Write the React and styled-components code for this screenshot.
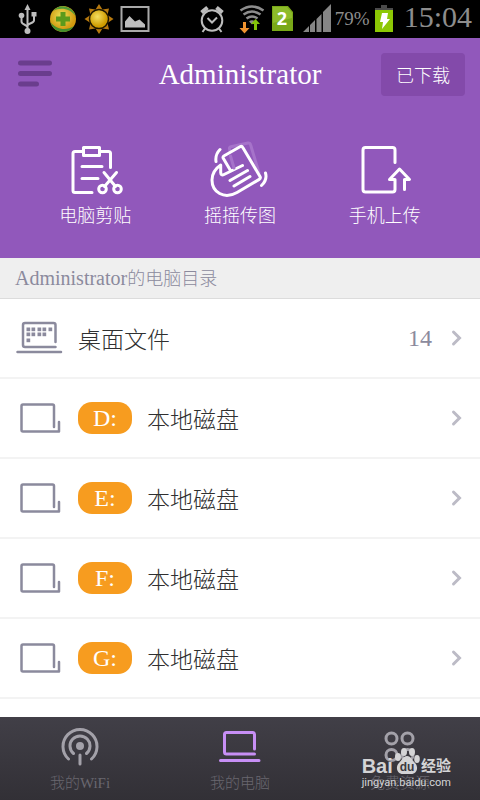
import React from 'react'
import styled, { createGlobalStyle } from 'styled-components'

const drives = ['D:', 'E:', 'F:', 'G:']

function UsbIcon() {
  return (
    <svg width="30" height="32" viewBox="0 0 30 32" fill="none" stroke="#bdbdbd" strokeWidth="2">
      <path d="M15.500 6v22M15.500 24.500c0-3-6-2.500-6-6V13M15.500 23c0-3 6.500-2.500 6.500-5.500V13" />
      <path d="M15.500 1l3 6h-6z" fill="#bdbdbd" stroke="none" />
      <circle cx="9.500" cy="12.500" r="2.800" fill="#bdbdbd" stroke="none" />
      <rect x="19.500" y="9" width="5" height="4.500" fill="#bdbdbd" stroke="none" />
      <circle cx="15.500" cy="28" r="3" fill="#bdbdbd" stroke="none" />
    </svg>
  )
}

function GuardIcon() {
  return (
    <svg width="30" height="32" viewBox="0 0 30 32">
      <defs>
        <radialGradient id="guard" cx="45%" cy="40%">
          <stop offset="0" stopColor="#ece45a" />
          <stop offset="1" stopColor="#d29a10" />
        </radialGradient>
      </defs>
      <circle cx="15" cy="16" r="13" fill="url(#guard)" />
      <path d="M5 8A13 13 0 0 1 27.500 13C22 5 12 4 5 8z" fill="#4f9a35" />
      <path d="M26 23A13 13 0 0 1 2.500 19C8 27 19 28 26 23z" fill="#438e2e" />
      <path d="M12.500 9h5v4.500H22v5h-4.500V23h-5v-4.500H8v-5h4.500z" fill="#5c9a1c" />
    </svg>
  )
}

function SunIcon() {
  return (
    <svg width="30" height="32" viewBox="0 0 30 32">
      <defs>
        <radialGradient id="sun" cx="42%" cy="38%">
          <stop offset="0" stopColor="#f3de62" />
          <stop offset="1" stopColor="#cf9c00" />
        </radialGradient>
      </defs>
      <path
        d="M15 1l3.500 5.500 6.500-1-1.500 6.500L29.500 16 23.500 20 25 26.500l-6.500-1L15 31l-3.500-5.500-6.500 1L6.500 20 .5 16l6-4L5 5.500l6.500 1z"
        fill="#b87a0f"
      />
      <circle cx="15" cy="16" r="9.500" fill="url(#sun)" stroke="#1c1500" strokeWidth="1.500" />
    </svg>
  )
}

function PictureIcon() {
  return (
    <svg width="30" height="32" viewBox="0 0 30 32">
      <rect x="1.500" y="4" width="27" height="24" fill="none" stroke="#a9a9a9" strokeWidth="2" />
      <path d="M5 24.500v-6l4.500-5.500 5.500 5.500 4.500-2 5.500 5v3z" fill="#bdbdbd" />
    </svg>
  )
}

function AlarmIcon() {
  return (
    <svg width="36" height="32" viewBox="0 0 36 32" fill="none" stroke="#bdbdbd" strokeWidth="2">
      <circle cx="13" cy="17.500" r="10.300" />
      <path d="M8.500 15l4.500 4.500 5-5M6 25.500L3.500 29M20 25.500l2.500 3.500" />
      <path d="M2.500 9.500l6-5M23.500 9.500l-6-5" strokeWidth="4" />
    </svg>
  )
}

function WifiSignal() {
  return (
    <svg width="28" height="32" viewBox="0 0 28 32" fill="none" stroke="#8d8d8d" strokeWidth="2.500">
      <path d="M1.500 7.500q11.500-8 23 0M4.500 11.500q8.500-6 17 0M7.500 15.500q5.500-4 11 0" />
      <path d="M10 18.500q3-2.500 6 0l-3 3z" fill="#8d8d8d" stroke="none" />
      <path d="M4 19h3v6h3.500l-5 5.500-5-5.500H4z" fill="#ef9330" stroke="none" />
      <path d="M15 27v-6h-3l4.500-5 4.500 5h-3v6z" fill="#84c40a" stroke="none" />
    </svg>
  )
}

function SimIcon() {
  return (
    <svg width="28" height="32" viewBox="0 0 28 32">
      <path d="M1 3h16l5 6v19H1z" fill="#79a818" />
      <path d="M2 4h14l5 6v5L2 20z" fill="#8dbb2a" />
      <text x="11" y="22" textAnchor="middle" fontFamily="Open Sans, sans-serif" fontWeight="700" fontSize="18" fill="#fff">2</text>
    </svg>
  )
}

function SignalIcon() {
  return (
    <svg width="28" height="32" viewBox="0 0 28 32" fill="#858585">
      <path d="M0 29l6-6v6zM7 22l5-5v12H7zM13.500 16l5-5v18h-5zM20 9l8-8v28h-8z" />
    </svg>
  )
}

function BatteryIcon() {
  return (
    <svg width="26" height="32" viewBox="0 0 26 32">
      <path d="M7 2h6v3h6v4H1V5h6z" fill="#4b4b4b" />
      <rect x="1" y="7" width="18" height="22" fill="#8dc805" />
      <path d="M8 10h6l-1 6h3L8 26l1-7H6z" fill="#fff" />
    </svg>
  )
}

function MenuIcon() {
  return (
    <svg width="36" height="28" viewBox="0 0 36 28" stroke="#6a3d8d" strokeWidth="5" strokeLinecap="round">
      <path d="M5.500 3h29M5.500 13.500h29M5.500 24h16" />
    </svg>
  )
}

function ClipboardIcon() {
  return (
    <svg width="60" height="60" viewBox="0 0 60 60" fill="none" stroke="#fff" strokeWidth="3" strokeLinecap="round" strokeLinejoin="round">
      <path d="M17 11.500H10q-2 0-2 2v37q0 2 2 2h17M35 11.500h8.500q2 0 2 2V27.500M17 26.500h20M17 38.500h16" />
      <rect x="18.500" y="7.500" width="16" height="8" />
      <path d="M39 32.500l11.500 14M51.500 32.500L39.500 46.500" />
      <circle cx="37.500" cy="49" r="3.800" />
      <circle cx="52.500" cy="49" r="3.800" />
    </svg>
  )
}

function ShakeIcon() {
  return (
    <svg width="60" height="60" viewBox="0 0 60 60" fill="none" stroke="#fff" strokeWidth="3" strokeLinecap="round" strokeLinejoin="round">
      <path d="M24 28L19.500 9q-.4-1.800 1.400-2.200L38 3q2-.4 2.500 1.500L49 33" stroke="#a673ca" />
      <path
        d="M20.500 30.500L13.400 18.500q-1-1.800.8-2.800L30 6.700q1.800-1 2.800.8L50 36.500q1 1.800-.8 2.900L27 52.500C14 60 2 52 2 40c0-7 3.500-11.500 8.700-15v7.500q.3 3.500 3.300 2l18.500-9"
        fill="#9158bb"
      />
      <path d="M24 28L20.500 16" stroke="#a673ca" />
      <path d="M20 40.500l17.500-10M24 46l16-9.500M10 9.500q-5 5-4 12M55.500 33q2 7-4 12.500" />
    </svg>
  )
}

function UploadIcon() {
  return (
    <svg width="60" height="60" viewBox="0 0 60 60" fill="none" stroke="#fff" strokeWidth="3" strokeLinecap="round" strokeLinejoin="round">
      <path d="M40 22.500V10q0-2.500-2.500-2.500H10.500Q8 7.500 8 10v39.500Q8 52 10.500 52h27Q40 52 40 49.500V39.500h-5.500l10-10.500 10 10.500h-5V49.500" />
    </svg>
  )
}

function DesktopIcon() {
  const dots = [[13, 9], [18, 9], [24, 9], [29, 9], [35, 9], [13, 14], [18, 14], [24, 14], [29, 14], [13, 20]]
  return (
    <svg width="48" height="36" viewBox="0 0 48 36" fill="none" stroke="#8b8a9d" strokeWidth="2.500" strokeLinecap="round">
      <path d="M40.500 22V5q0-2-2-2H10Q8 3 8 5v20q0 2 2 2h30.500M2.500 32h43.500" />
      {dots.map(([x, y]) => (
        <rect key={`${x}-${y}`} x={x - 1.5} y={y - 1.5} width="3.700" height="3.700" fill="#8b8a9d" stroke="none" />
      ))}
    </svg>
  )
}

function DriveIcon() {
  return (
    <svg width="48" height="36" viewBox="0 0 48 36" fill="none" stroke="#8b8a9d" strokeWidth="2.500" strokeLinecap="round" strokeLinejoin="round">
      <path d="M39 27V6q0-1.500-1.500-1.500H8Q6.500 4.500 6.500 6v24q0 1.500 1.500 1.500h36V22" />
    </svg>
  )
}

function ChevronIcon() {
  return (
    <svg width="18" height="20" viewBox="0 0 18 20" fill="none" stroke="#bcbbc6" strokeWidth="3" strokeLinecap="round">
      <path d="M6.500 4l6 6-6 6" />
    </svg>
  )
}

function HotspotIcon() {
  return (
    <svg width="40" height="40" viewBox="0 0 40 40" fill="none" stroke="#a3a1a9" strokeWidth="3" strokeLinecap="round">
      <path d="M8.500 32A17 17 0 1 1 31.500 32M13.500 26.500a10 10 0 1 1 13 0M20 28v9" />
      <circle cx="20" cy="19" r="4" fill="#a3a1a9" stroke="none" />
    </svg>
  )
}

function LaptopIcon() {
  return (
    <svg width="42" height="40" viewBox="0 0 42 40" fill="none" stroke="#c78ff5" strokeWidth="3" strokeLinecap="round">
      <path d="M35.500 22V7.500q0-2-2-2h-26q-2 0-2 2v17.500q0 2 2 2h28M1.500 33.500h38.500" />
    </svg>
  )
}

function AppsIcon() {
  return (
    <svg width="40" height="40" viewBox="0 0 40 40" fill="none" stroke="#a3a1a9" strokeWidth="3">
      <circle cx="11.500" cy="11.500" r="5.500" />
      <circle cx="27.500" cy="11.500" r="5.500" />
      <circle cx="11.500" cy="28" r="5.500" />
      <circle cx="27.500" cy="28" r="5.500" />
    </svg>
  )
}

function PawIcon() {
  return (
    <svg width="26" height="28" viewBox="0 0 26 28" fill="#d4d4d6">
      <ellipse cx="4" cy="10" rx="3" ry="4" />
      <ellipse cx="10" cy="5" rx="3" ry="4" />
      <ellipse cx="18" cy="5" rx="3" ry="4" />
      <ellipse cx="23" cy="12" rx="2.800" ry="4" />
      <path d="M13 9c4 0 5 4 8 7 4 4 2 11-4 11H9c-6 0-8-7-4-11C8 13 9 9 13 9z" />
      <text x="13" y="24" textAnchor="middle" fontFamily="Liberation Sans, sans-serif" fontWeight="700" fontSize="12" fill="#3b3940">du</text>
    </svg>
  )
}

function App() {
  return (
    <Page>
      <GlobalStyle />
      <StatusBar>
        <StatusGroup $gap="6px">
          <UsbIcon />
          <GuardIcon />
          <SunIcon />
          <PictureIcon />
        </StatusGroup>
        <StatusGroup $gap="4px">
          <AlarmIcon />
          <WifiSignal />
          <SimIcon />
          <SignalIcon />
          <Percent>79%</Percent>
          <BatteryIcon />
          <Clock>15:04</Clock>
        </StatusGroup>
      </StatusBar>

      <Header>
        <TitleBar>
          <MenuButton aria-label="菜单"><MenuIcon /></MenuButton>
          <Title>Administrator</Title>
          <DownloadButton>已下载</DownloadButton>
        </TitleBar>
        <Actions>
          <Action><ClipboardIcon />电脑剪贴</Action>
          <Action><ShakeIcon />摇摇传图</Action>
          <Action><UploadIcon />手机上传</Action>
        </Actions>
      </Header>

      <Main>
        <SectionTitle><Latin>Administrator</Latin>的电脑目录</SectionTitle>
        <List>
          <li>
            <Row href="#desktop">
              <DesktopIcon />
              <RowName>桌面文件</RowName>
              <Count>14</Count>
              <ChevronIcon />
            </Row>
          </li>
          {drives.map((drive) => (
            <li key={drive}>
              <Row href={`#${drive[0]}`}>
                <DriveIcon />
                <DriveBadge>{drive}</DriveBadge>
                <RowName>本地磁盘</RowName>
                <ChevronIcon />
              </Row>
            </li>
          ))}
        </List>
      </Main>

      <TabBar>
        <Tab><HotspotIcon />我的WiFi</Tab>
        <Tab><LaptopIcon />我的电脑</Tab>
        <Tab><AppsIcon />免费资源</Tab>
        <Watermark>
          <Brand>
            <BrandName>Bai</BrandName>
            <PawIcon />
            <BrandSuffix>经验</BrandSuffix>
          </Brand>
          <Site>jingyan.baidu.com</Site>
        </Watermark>
      </TabBar>
    </Page>
  )
}

const GlobalStyle = createGlobalStyle`
  * {
    box-sizing: border-box;
  }
  body {
    margin: 0;
    background: #fff;
    font-family: 'Liberation Serif', 'Noto Sans CJK SC', serif;
    font-weight: 300;
  }
  button {
    border: 0;
    padding: 0;
    background: none;
    font: inherit;
    cursor: pointer;
  }
  svg {
    display: block;
    flex-shrink: 0;
    overflow: visible;
  }
`

const Page = styled.div`
  display: flex;
  flex-direction: column;
  min-height: 100vh;
`

const StatusBar = styled.div`
  display: flex;
  justify-content: space-between;
  align-items: center;
  height: 38px;
  padding: 0 8px 0 12px;
  background: #000;
  color: #8d8d8d;
`

const StatusGroup = styled.div`
  display: flex;
  align-items: center;
  gap: ${(props) => props.$gap};
`

const Percent = styled.span`
  font-size: 19px;
`

const Clock = styled.span`
  padding-bottom: 4px;
  font-size: 30px;
  line-height: 32px;
`

const Header = styled.header`
  padding-bottom: 30px;
  background: #9158bb;
  color: #fff;
`

const TitleBar = styled.div`
  display: grid;
  grid-template-columns: 84px 1fr 84px;
  align-items: center;
  height: 72px;
  padding: 0 15px;
`

const MenuButton = styled.button`
  justify-self: start;
`

const Title = styled.h1`
  margin: 0;
  font-size: 29px;
  font-weight: 400;
  text-align: center;
`

const DownloadButton = styled.button`
  height: 43px;
  border-radius: 4px;
  background: #834aaa;
  color: #fff;
  font-size: 18px;
`

const Actions = styled.div`
  display: grid;
  grid-template-columns: repeat(3, 1fr);
  padding: 30px 23px 0;
`

const Action = styled.button`
  display: flex;
  flex-direction: column;
  align-items: center;
  gap: 4px;
  color: #fff;
  font-size: 18px;
  line-height: 24px;
`

const Main = styled.main`
  flex: 1;
  background: #fff;
`

const SectionTitle = styled.h2`
  height: 41px;
  margin: 0;
  padding: 0 15px;
  border-bottom: 1px solid #dcdcdc;
  background: #efefef;
  color: #8b8a9d;
  font-size: 18px;
  font-weight: 300;
  line-height: 40px;
`

const Latin = styled.span`
  font-size: 20px;
`

const List = styled.ul`
  margin: 0;
  padding: 0;
  list-style: none;
`

const Row = styled.a`
  display: flex;
  align-items: center;
  gap: 15px;
  height: 80px;
  padding: 0 15px;
  border-bottom: 2px solid #f3f3f3;
  color: #303030;
  text-decoration: none;
`

const RowName = styled.span`
  flex: 1;
  font-size: 23px;
`

const Count = styled.span`
  color: #8b8a9d;
  font-size: 24px;
`

const DriveBadge = styled.span`
  min-width: 54px;
  padding: 0 15px;
  border-radius: 14px;
  background: #f79c1f;
  color: #fff;
  font-size: 24px;
  line-height: 32px;
  text-align: center;
`

const TabBar = styled.nav`
  position: sticky;
  bottom: 0;
  display: grid;
  grid-template-columns: repeat(3, 1fr);
  padding: 10px 0 7px;
  background: linear-gradient(#413f47, #323036);
`

const Tab = styled.button`
  display: flex;
  flex-direction: column;
  align-items: center;
  gap: 6px;
  color: #69676f;
  font-size: 15px;
  line-height: 20px;
`

/* sits over the last tab */
const Watermark = styled.div`
  position: absolute;
  right: 29px;
  bottom: 10px;
  color: #d4d4d6;
  font-family: Roboto, 'Noto Sans CJK SC', sans-serif;
  font-weight: 400;
  pointer-events: none;
`

const Brand = styled.div`
  display: flex;
  align-items: flex-end;
  justify-content: space-between;
`

const BrandName = styled.span`
  font-family: 'Liberation Sans', sans-serif;
  font-size: 20px;
  font-weight: 700;
  line-height: 18px;
`

const BrandSuffix = styled.span`
  font-size: 15px;
  font-weight: 700;
  line-height: 18px;
`

const Site = styled.div`
  font-size: 11px;
  line-height: 15px;
`

export default App
